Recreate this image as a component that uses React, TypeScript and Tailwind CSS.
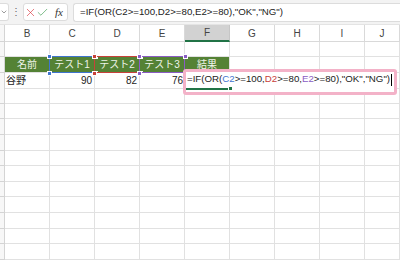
import { Check, X, ChevronDown } from "lucide-react";

const COLS = ["B", "C", "D", "E", "F", "G", "H", "I", "J"];
const ROW_COUNT = 14;

const HEADS = ["名前", "テスト1", "テスト2", "テスト3", "結果"];
const RANGES = [
  { col: 1, color: "#3f74cf" },
  { col: 2, color: "#c8413a" },
  { col: 3, color: "#8a5cc4" },
];

function Handle({ color, pos }: { color: string; pos: string }) {
  return (
    <span
      className={`absolute h-[5px] w-[5px] border border-white ${pos}`}
      style={{ backgroundColor: color }}
    />
  );
}

function HeaderCell({ text, col }: { text: string; col: number }) {
  const range = RANGES.find((r) => r.col === col);
  return (
    <div className="relative flex items-center justify-center border-r border-b border-[#e1e1e1] bg-[#548235] text-[10px] text-[#eef4ea]">
      <span>{text}</span>
      {range && (
        <div
          className="absolute -left-[1px] -top-[1px] -right-[1px] -bottom-[1px] z-10 border-[1.5px]"
          style={{ borderColor: range.color }}
        >
          <Handle color={range.color} pos="-left-[3.5px] -top-[3.5px]" />
          <Handle color={range.color} pos="-right-[3.5px] -top-[3.5px]" />
          <Handle color={range.color} pos="-left-[3.5px] -bottom-[3.5px]" />
          <Handle color={range.color} pos="-right-[3.5px] -bottom-[3.5px]" />
        </div>
      )}
    </div>
  );
}

function EditCell() {
  return (
    <div className="relative border-r border-b border-[#e1e1e1]">
      <div className="absolute -left-[2px] -top-[4px] z-30 h-[26px] w-[214px] rounded-[3px] border-[3px] border-[#f3b2c8] bg-white">
        <div className="flex h-[16px] items-center whitespace-nowrap pl-[1px] text-[9.7px] text-[#222]">
          <span>=IF(OR(</span>
          <span className="text-[#3f74cf]">C2</span>
          <span>&gt;=100,</span>
          <span className="text-[#c8413a]">D2</span>
          <span>&gt;=80,</span>
          <span className="text-[#8a5cc4]">E2</span>
          <span>&gt;=80),"OK","NG")</span>
          <span className="ml-[1px] h-[12px] w-px bg-black" />
        </div>
        <div className="relative h-[2px] w-[44px] bg-[#217346]">
          <span className="absolute -right-[3px] -top-[1.5px] h-[5px] w-[5px] border border-white bg-[#217346]" />
        </div>
      </div>
    </div>
  );
}

function Row({ index }: { index: number }) {
  if (index === 1) {
    return (
      <div className="grid h-[15.6px] grid-cols-[5px_repeat(8,45px)_1fr]">
        <div className="border-r border-b border-[#d4d4d4] bg-[#f7f7f7]" />
        {HEADS.map((h, i) => (
          <HeaderCell key={h} text={h} col={i} />
        ))}
        {COLS.slice(5).map((c) => (
          <div key={c} className="border-r border-b border-[#e1e1e1]" />
        ))}
      </div>
    );
  }
  if (index === 2) {
    return (
      <div className="grid h-[15.6px] grid-cols-[5px_repeat(8,45px)_1fr] text-[10px] text-[#222]">
        <div className="border-r border-b border-[#d4d4d4] bg-[#f7f7f7]" />
        <div className="flex items-center border-r border-b border-[#e1e1e1] pl-[1px]">谷野</div>
        <div className="flex items-center justify-end border-r border-b border-[#e1e1e1] pr-[2px]">90</div>
        <div className="flex items-center justify-end border-r border-b border-[#e1e1e1] pr-[2px]">82</div>
        <div className="flex items-center justify-end border-r border-b border-[#e1e1e1] pr-[1px]">76</div>
        <EditCell />
        {COLS.slice(5).map((c) => (
          <div key={c} className="border-r border-b border-[#e1e1e1]" />
        ))}
      </div>
    );
  }
  return (
    <div className="grid h-[15.6px] grid-cols-[5px_repeat(8,45px)_1fr]">
      <div className="border-r border-b border-[#d4d4d4] bg-[#f7f7f7]" />
      {COLS.map((c) => (
        <div key={c} className="border-r border-b border-[#e1e1e1]" />
      ))}
    </div>
  );
}

export default function App() {
  return (
    <div className="h-[266px] w-[400px] overflow-hidden bg-white font-['Liberation_Sans','Noto_Sans_CJK_JP',sans-serif]">
      {/* Formula bar */}
      <div className="flex h-[24px] items-center bg-[#f3f3f3]">
        <div className="flex h-[18px] w-[9px] shrink-0 items-center justify-end rounded-r-[3px] border border-l-0 border-[#dcdcdc] bg-white">
          <ChevronDown size={8} strokeWidth={1.6} className="text-[#444]" />
        </div>
        <div className="flex w-[14px] shrink-0 justify-center text-[10px] leading-none text-[#666]">⋮</div>
        <div className="flex h-[18px] w-[45px] shrink-0 items-center rounded-[3px] border border-[#dcdcdc] bg-white pl-[0px]">
          <X size={13} strokeWidth={1.2} className="text-[#d9363e]" />
          <Check size={13} strokeWidth={1.2} className="-ml-[1px] text-[#3a9b4d]" />
          <span className="ml-[6px] font-['Liberation_Serif',serif] text-[11px] italic text-[#333]">fx</span>
        </div>
        <div className="ml-[5px] flex h-[19px] flex-1 items-center rounded-l-[3px] border border-r-0 border-[#dcdcdc] bg-white pl-[6px] text-[9.7px] text-[#222] whitespace-nowrap">
          =IF(OR(C2&gt;=100,D2&gt;=80,E2&gt;=80),"OK","NG")
        </div>
      </div>

      {/* Column headers */}
      <div className="grid h-[17.5px] grid-cols-[5px_repeat(8,45px)_1fr] border-t border-[#e4e4e4] text-[10px] text-[#444]">
        <div className="border-r border-b border-[#d4d4d4] bg-[#f7f7f7]" />
        {COLS.map((c) =>
          c === "F" ? (
            <div key={c} className="flex items-center justify-center border-r border-b-2 border-r-[#c6c6c6] border-b-[#217346] bg-[#d2d2d2]">
              {c}
            </div>
          ) : (
            <div key={c} className="flex items-center justify-center border-r border-b border-[#d9d9d9]">
              {c}
            </div>
          )
        )}
      </div>

      {Array.from({ length: ROW_COUNT }, (_, i) => (
        <Row key={i} index={i} />
      ))}
    </div>
  );
}
